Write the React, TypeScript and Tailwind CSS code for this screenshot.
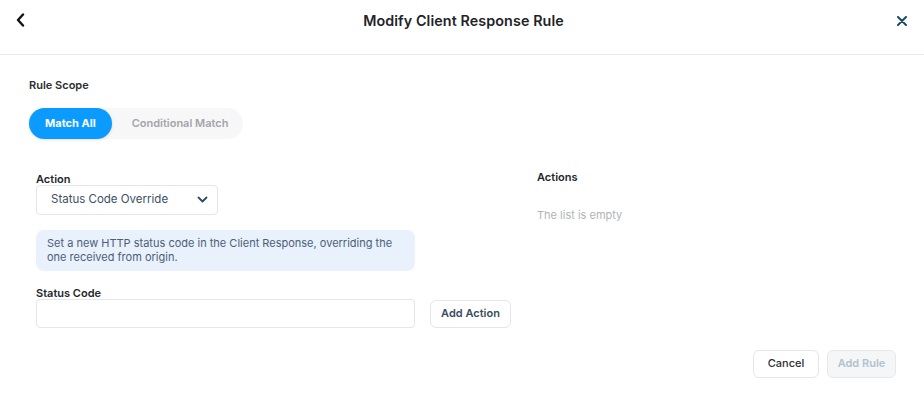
import React from 'react';

export default function App() {
  return (
    <div className="w-[924px] h-[393px] bg-white font-['Inter',sans-serif] text-[#1f2328]">
      {/* header */}
      <div className="h-[55px] border-b border-[#e8e8ea] flex items-center justify-between px-[14px]">
        <button className="w-[12px] h-[16px] flex items-center justify-center -mt-[14px]">
          <svg width="9" height="14" viewBox="0 0 9 14" fill="none" stroke="#111" strokeWidth="2.4" strokeLinecap="round" strokeLinejoin="round">
            <path d="M7 1.5 2 7l5 5.5" />
          </svg>
        </button>
        <h1 className="text-[14.3px] font-semibold tracking-[0.1px] -mt-[12px] ml-[6px]">Modify Client Response Rule</h1>
        <button className="w-[14px] h-[14px] flex items-center justify-center -mt-[12px] mr-[1px]">
          <svg width="10" height="10" viewBox="0 0 10 10" fill="none" stroke="#1c4a64" strokeWidth="2" strokeLinecap="round">
            <path d="M1 1l8 8M9 1l-8 8" />
          </svg>
        </button>
      </div>

      <div className="pl-[29px] pt-[22px]">
        <div className="text-[11px] font-semibold text-[#2b2f33]">Rule Scope</div>
        <div className="mt-[14px] inline-flex items-center h-[31px] rounded-full bg-[#f7f7f8]">
          <button className="h-[31px] px-[16px] rounded-full bg-[#0b9bff] text-white text-[11px] font-bold shadow-[0_1px_3px_rgba(0,0,0,0.12)]">
            Match All
          </button>
          <span className="pl-[20px] pr-[15px] text-[11px] font-semibold text-[#a3a5a8]">Conditional Match</span>
        </div>
      </div>

      <div className="flex pl-[36px] mt-[33px]">
        <div className="w-[379px]">
          <div className="text-[11px] font-semibold text-[#24282c] leading-[14px]">Action</div>
          <div className="-mt-[1px] w-[182px] h-[30px] border border-[#e3e6ea] rounded-[4px] flex items-center justify-between pl-[14px] pr-[9px]">
            <span className="text-[11.5px] text-[#3a5068]">Status Code Override</span>
            <svg width="11" height="7" viewBox="0 0 11 7" fill="none" stroke="#2e4a66" strokeWidth="1.8" strokeLinecap="round" strokeLinejoin="round">
              <path d="M1.5 1.5 5.5 5.5 9.5 1.5" />
            </svg>
          </div>
          <div className="mt-[15px] rounded-[8px] bg-[#e9f1fc] px-[11px] pt-[6px] pb-[7px] text-[11px] leading-[14px] text-[#4a6078]">
            Set a new HTTP status code in the Client Response, overriding the one received from origin.
          </div>
          <div className="mt-[15px] text-[11px] font-semibold text-[#24282c] leading-[14px]">Status Code</div>
          <div className="flex items-center -mt-[1px]">
            <input className="w-[379px] h-[29px] shrink-0 border border-[#e3e6ea] rounded-[4px] outline-none px-2 text-[11px]" />
          </div>
        </div>
        <div className="flex flex-col justify-end">
          <button className="ml-[15px] w-[81px] h-[28px] border border-[#e3e6ea] rounded-[6px] text-[11px] font-semibold text-[#3a4d60]">
            Add Action
          </button>
        </div>
        <div className="ml-[26px] -mt-[3px]">
          <div className="text-[11px] font-semibold text-[#24282c]">Actions</div>
          <div className="mt-[22px] text-[11px] text-[#b1b4b8]">The list is empty</div>
        </div>
      </div>

      <div className="flex justify-end gap-[8px] pr-[28px] mt-[22px]">
        <button className="w-[66px] h-[28px] border border-[#e3e6ea] rounded-[6px] text-[11px] font-medium text-[#2b2f33]">
          Cancel
        </button>
        <button className="w-[69px] h-[28px] border border-[#e6e9ec] bg-[#f4f6f8] rounded-[6px] text-[11px] font-semibold text-[#b3c2ce]">
          Add Rule
        </button>
      </div>
    </div>
  );
}
